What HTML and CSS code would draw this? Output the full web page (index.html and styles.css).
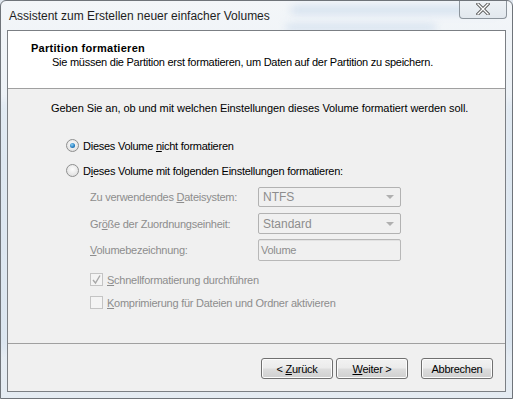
FILE: index.html
```html
<!DOCTYPE html>
<html lang="de">
<head>
  <meta charset="UTF-8">
  <title>Assistent zum Erstellen neuer einfacher Volumes</title>
  <link rel="stylesheet" href="styles.css">
</head>
<body>

  <div class="window">
    <div class="glass">
      <span class="blur b1"></span>
      <span class="blur b2"></span>
      <span class="blur b3"></span>
      <span class="blur b4"></span>
    </div>

    <div class="titlebar">
      <span class="title">Assistent zum Erstellen neuer einfacher Volumes</span>
      <div class="close">
        <svg width="14" height="12" viewBox="0 0 14 12">
          <path d="M2 1 L12 11 M12 1 L2 11" stroke="#555" stroke-width="3.2" stroke-linecap="square"/>
          <path d="M2 1 L12 11 M12 1 L2 11" stroke="#fff" stroke-width="1.4" stroke-linecap="square"/>
        </svg>
      </div>
    </div>

    <div class="client">
      <div class="header">
        <p class="header-title">Partition formatieren</p>
        <p class="header-sub">Sie müssen die Partition erst formatieren, um Daten auf der Partition zu speichern.</p>
      </div>

      <div class="content">
        <p class="intro">Geben Sie an, ob und mit welchen Einstellungen dieses Volume formatiert werden soll.</p>

        <div class="option">
          <span class="radio checked"></span>
          <span>Dieses Volume <u>n</u>icht formatieren</span>
        </div>
        <div class="option">
          <span class="radio"></span>
          <span>D<u>i</u>eses Volume mit folgenden Einstellungen formatieren:</span>
        </div>

        <div class="settings">
          <div class="field">
            <span class="label">Zu verwendendes <u>D</u>ateisystem:</span>
            <div class="combo first"><span>NTFS</span><span class="arrow"></span></div>
          </div>
          <div class="field">
            <span class="label">Gr<u>ö</u>ße der Zuordnungseinheit:</span>
            <div class="combo"><span>Standard</span><span class="arrow"></span></div>
          </div>
          <div class="field">
            <span class="label"><u>V</u>olumebezeichnung:</span>
            <div class="textbox">Volume</div>
          </div>

          <div class="check-row first">
            <span class="checkbox">
              <svg width="11" height="11" viewBox="0 0 11 11">
                <path d="M2 6 L4.5 9 L9 1.5" fill="none" stroke="#a8a8a8" stroke-width="1.4"/>
              </svg>
            </span>
            <span><u>S</u>chnellformatierung durchführen</span>
          </div>
          <div class="check-row">
            <span class="checkbox"></span>
            <span><u>K</u>omprimierung für Dateien und Ordner aktivieren</span>
          </div>
        </div>
      </div>

      <div class="footer">
        <button class="btn">&lt; <u>Z</u>urück</button>
        <button class="btn"><u>W</u>eiter &gt;</button>
        <button class="btn cancel">Abbrechen</button>
      </div>
    </div>
  </div>

</body>
</html>
```

FILE: styles.css
```css
body{
  margin: 0;
  width: 513px;
  height: 399px;
  overflow: hidden;
  background-color: #dfe6ee;
  font-family: "Liberation Sans", Arial, sans-serif;
}

.window{
  position: relative;
  width: 513px;
  height: 399px;
  box-sizing: border-box;
  border: 1px solid #6f747a;
  border-radius: 6px 6px 0 0;
  background: linear-gradient(180deg, #f3f6f9 0%, #e8eef4 40%, #e4ebf2 100%);
  display: flex;
  flex-direction: column;
  overflow: hidden;
}

/* blurred stuff behind the glass */
.glass{
  position: absolute;
  inset: 0;
  pointer-events: none;
}

.blur{
  position: absolute;
  background-color: #a9c4e2;
  filter: blur(4px);
  opacity: 0.55;
  border-radius: 3px;
}

.b1{ left: 290px; top: 6px; width: 210px; height: 6px; }
.b2{ left: 285px; top: 24px; width: 150px; height: 5px; }
.b3{ left: 0px; top: 100px; width: 4px; height: 250px; opacity: 0.45; }
.b4{ left: 508px; top: 100px; width: 4px; height: 250px; opacity: 0.45; }

.titlebar{
  position: relative;
  height: 29px;
  display: flex;
  justify-content: space-between;
  align-items: flex-start;
}

.title{
  font-family: "Liberation Sans", Arial, sans-serif;
  font-size: 12px;
  color: #1e1e1e;
  margin: 8px 0 0 8px;
}

.close{
  width: 46px;
  height: 18px;
  margin: -1px 5px 0 0;
  border: 1px solid #8c949c;
  border-top: none;
  border-radius: 0 0 4px 4px;
  background: linear-gradient(180deg, #eef2f6 0%, #e2e8ee 100%);
  display: flex;
  justify-content: center;
  align-items: center;
}

.client{
  position: relative;
  margin: 0 6px 6px 6px;
  flex: 1;
  border: 1px solid #7b7f84;
  background-color: #f0f0f0;
  display: flex;
  flex-direction: column;
  font-size: 11px;
  letter-spacing: -0.25px;
  color: #000;
}

.header{
  background-color: #fff;
  height: 58px;
  border-bottom: 1px solid #a0a0a0;
  box-sizing: border-box;
}

p{
  margin: 0;
}

.header-title{
  font-weight: bold;
  letter-spacing: 0.28px;
  margin: 11px 0 0 23px;
}

.header-sub{
  margin: 2px 0 0 44px;
}

.content{
  flex: 1;
  border-bottom: 1px solid #a0a0a0;
}

.intro{
  letter-spacing: -0.07px;
  margin: 13px 0 0 43px;
}

.option{
  display: flex;
  align-items: center;
  gap: 4px;
  margin-left: 58px;
  height: 13px;
}

.intro + .option{
  margin-top: 25px;
}

.option + .option{
  margin-top: 12px;
}

.radio{
  width: 11px;
  height: 11px;
  border-radius: 50%;
  border: 1px solid #8e8f8f;
  background: radial-gradient(circle at 50% 40%, #fdfdfd 0%, #e4e4e4 70%, #d6d6d6 100%);
  display: flex;
  justify-content: center;
  align-items: center;
}

.radio.checked::after{
  content: "";
  width: 5px;
  height: 5px;
  border-radius: 50%;
  background: radial-gradient(circle at 40% 35%, #8fd2f6 0%, #2a82c4 55%, #0b4f8f 100%);
}

.settings{
  margin: 9px 0 0 82px;
  color: #8d8d8d;
}

.field{
  display: flex;
  align-items: center;
  height: 21px;
  margin-bottom: 6px;
}

.field + .field{
  margin-bottom: 5px;
}

.label{
  width: 168px;
}

.combo,
.textbox{
  width: 143px;
  height: 21px;
  box-sizing: border-box;
  border: 1px solid #b2b2b2;
  border-radius: 2px;
  background-color: #f0f0f0;
  display: flex;
  align-items: center;
  justify-content: space-between;
  padding: 0 6px 0 4px;
  font-size: 12px;
  letter-spacing: 0;
  color: #8d8d8d;
}

.combo.first{
  height: 20px;
}

.textbox{
  height: 22px;
  padding-left: 2px;
  font-size: 11px;
  letter-spacing: -0.25px;
  border-color: #b8b8b8;
  box-shadow: inset 0 1px 0 #e2e2e2;
}

.arrow{
  width: 0;
  height: 0;
  border-left: 4px solid transparent;
  border-right: 4px solid transparent;
  border-top: 4px solid #b0b0b0;
}

.check-row{
  display: flex;
  align-items: center;
  gap: 4px;
  height: 13px;
  margin-top: 10px;
}

.check-row.first{
  margin-top: 13px;
}

.checkbox{
  width: 11px;
  height: 11px;
  border: 1px solid #c4c4c4;
  background-color: #f4f4f4;
  display: flex;
  justify-content: center;
  align-items: center;
}

.footer{
  height: 47px;
  display: flex;
  align-items: flex-start;
  padding: 14px 0 0 253px;
  box-sizing: border-box;
  gap: 3px;
}

.btn{
  width: 72px;
  height: 21px;
  border: 1px solid #707070;
  border-radius: 3px;
  background: linear-gradient(180deg, #f2f2f2 0%, #ebebeb 48%, #dddddd 52%, #cfcfcf 100%);
  box-shadow: inset 0 0 0 1px #fcfcfc;
  font-family: "Liberation Sans", Arial, sans-serif;
  font-size: 11px;
  letter-spacing: -0.25px;
  color: #000;
  padding: 0;
}

.btn.cancel{
  margin-left: 10px;
}
```
